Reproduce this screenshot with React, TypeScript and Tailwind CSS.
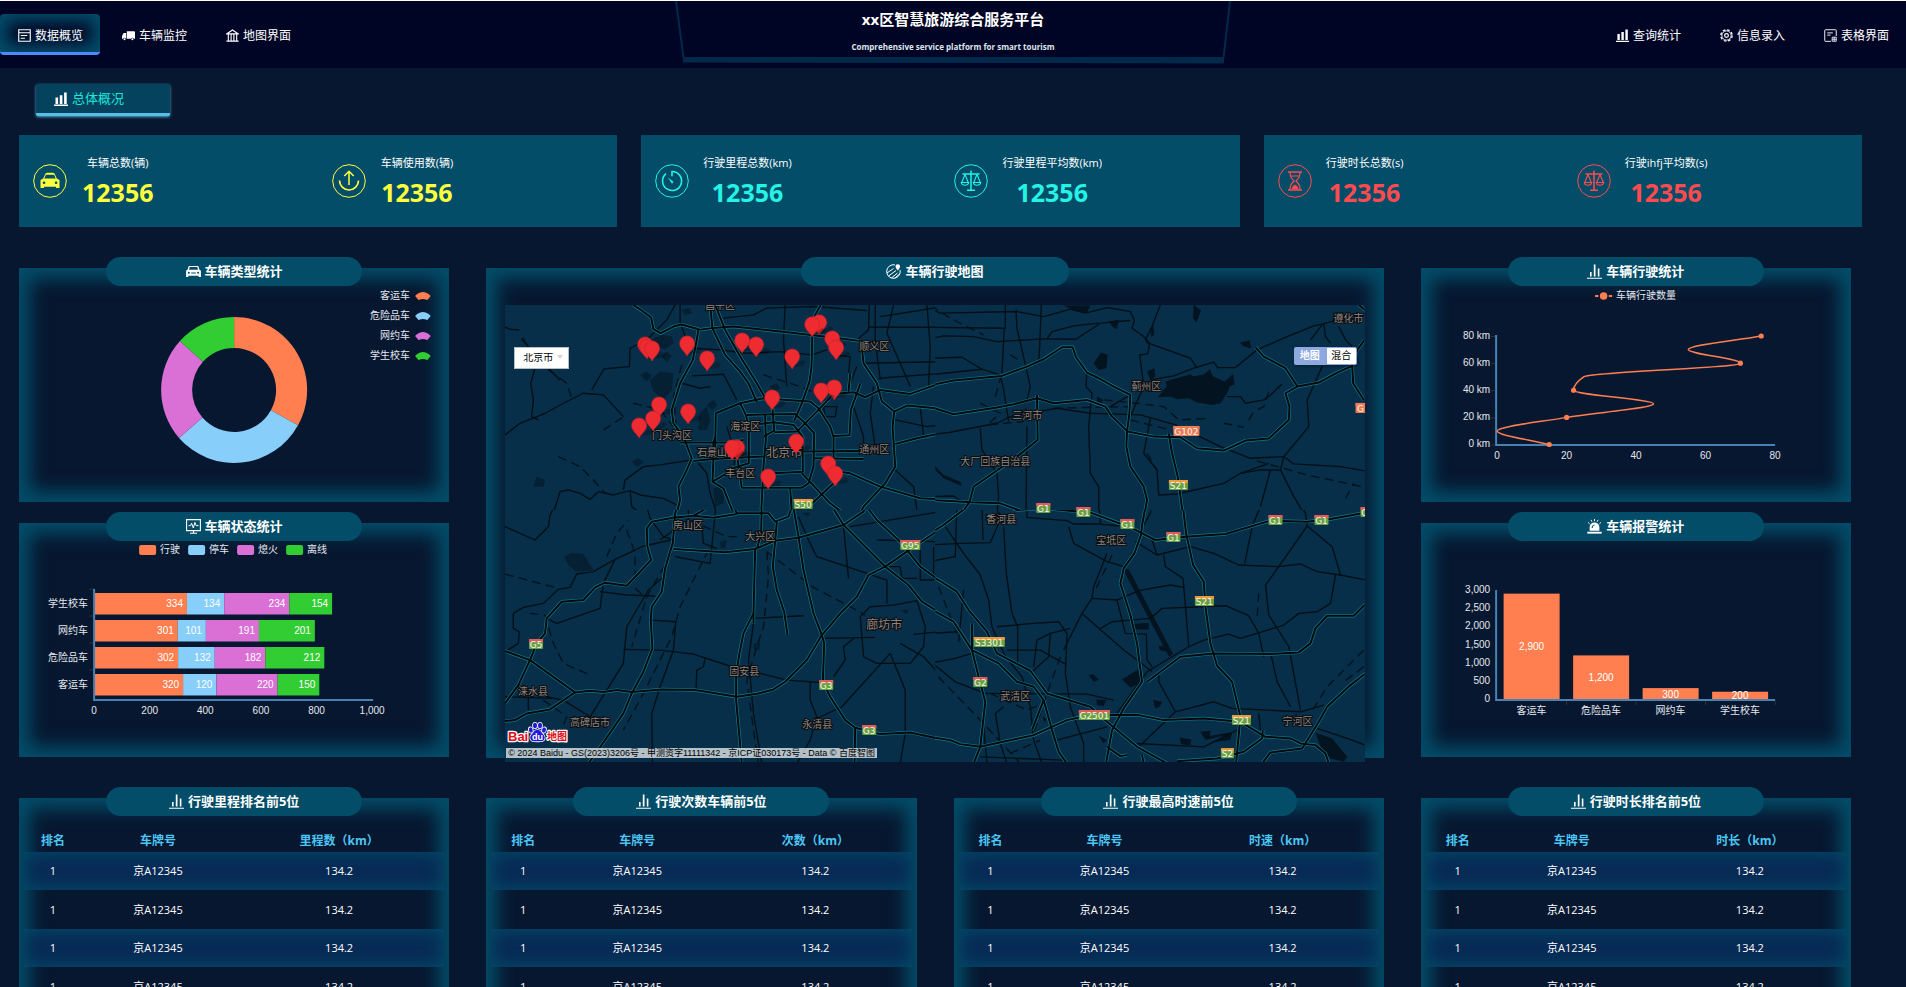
import type { ReactNode } from "react";

/* ---------- icons ---------- */

type IconProps = { className?: string };

const FormIcon = ({ className }: IconProps) => (
  <svg viewBox="0 0 14 14" className={className} fill="none" stroke="currentColor" aria-hidden="true">
    <path d="M.8.8h12.4v12.4H.8zM.8 4h12.4M3 7h7M3 10h4.5" strokeWidth="1.2" />
  </svg>
);

const TruckIcon = ({ className }: IconProps) => (
  <svg viewBox="0 0 14 14" className={className} fill="currentColor" aria-hidden="true">
    <path d="M5.2 2.5H13a1 1 0 0 1 1 1v7h-1.2a1.6 1.6 0 0 0-3.1 0H5.2zM0 7.5 1.8 4.4h2.7v6.1h-.3a1.6 1.6 0 0 0-3.1 0H0z" />
    <circle cx="2.7" cy="11" r="1.1" />
    <circle cx="11.2" cy="11" r="1.1" />
  </svg>
);

const BankIcon = ({ className }: IconProps) => (
  <svg viewBox="0 0 14 14" className={className} fill="none" stroke="currentColor" aria-hidden="true">
    <path d="M1 5.2 7 1l6 4.2zM2.5 5.5v7M5.5 5.5v7M8.5 5.5v7M11.5 5.5v7M.5 13h13" strokeWidth="1.2" />
  </svg>
);

const BarsIcon = ({ className }: IconProps) => (
  <svg viewBox="0 0 14 14" className={className} fill="currentColor" aria-hidden="true">
    <path d="M0 12.6h14V14H0zM1.5 5.5h2.6v6.4H1.5zM5.8 3.2h2.6v8.7H5.8zM10.1.6h2.6v11.3h-2.6z" />
  </svg>
);

const ThinBarsIcon = ({ className }: IconProps) => (
  <svg viewBox="0 0 15 15" className={className} fill="currentColor" aria-hidden="true">
    <path d="M0 13.8h15v1H0zM3 8h1.6v4.6H3zM6.8.4h1.7v12.2H6.8zM10.8 4.4h1.6v8.2h-1.6z" />
  </svg>
);

const GearIcon = ({ className }: IconProps) => (
  <svg viewBox="0 0 14 14" className={className} fill="none" stroke="currentColor" aria-hidden="true">
    <circle cx="7" cy="7" r="6.1" strokeWidth="1.4" strokeDasharray="2.79 2" />
    <circle cx="7" cy="7" r="5" strokeWidth="1" />
    <circle cx="7" cy="7" r="2" strokeWidth="1.3" />
  </svg>
);

const SheetIcon = ({ className }: IconProps) => (
  <svg viewBox="0 0 14 14" className={className} fill="none" stroke="currentColor" aria-hidden="true">
    <path d="M7.5 13.3H1.6a.8.8 0 0 1-.8-.8V1.6a.8.8 0 0 1 .8-.8h10.8a.8.8 0 0 1 .8.8v6M3.5 4.2h6M3.5 6.6h3.6" />
    <path d="M8.8 8.8h4.4v4.4H8.8zM8.8 11h4.4M11 8.8v4.4" strokeWidth=".9" />
  </svg>
);

const CarIcon = ({ className }: IconProps) => (
  <svg viewBox="0 0 16 14" className={className} fill="currentColor" aria-hidden="true">
    <path
      fillRule="evenodd"
      d="M3.6 1h8.8c.6 0 1 .3 1.1.8l.9 3.2c.9.2 1.6.9 1.6 1.800V12.800h-2.500v-1.300h-11V12.800H0V6.800C0 5.900.7 5.200 1.600 5l.9-3.200C2.600 1.300 3 1 3.600 1zm.3 1.200L3.200 5h9.600l-.7-2.800zM3 7.200a1.100 1.100 0 1 0 0 2.200 1.100 1.100 0 0 0 0-2.200zm10 0a1.100 1.100 0 1 0 0 2.200 1.100 1.100 0 0 0 0-2.200zM5.500 8h5v1.200h-5z"
    />
  </svg>
);

const MonitorIcon = ({ className }: IconProps) => (
  <svg viewBox="0 0 15 15" className={className} fill="none" stroke="currentColor" aria-hidden="true">
    <path d="M.6.6h13.8v11H.6zM7.500 11.600v2.200M4 14.300h7" strokeWidth="1.1" />
    <path d="M2.600 6.600h2l1-2.400 1.700 4.800 1.600-5.600 1.200 3.200h2.400" strokeWidth="1" />
  </svg>
);

const MapPinIcon = ({ className }: IconProps) => (
  <svg viewBox="0 0 15 15" className={className} fill="none" stroke="currentColor" aria-hidden="true">
    <path d="M9 .9A6.800 6.800 0 1 0 14.100 6M1 9l6.500-4.500M2.500 12 10 6.500M5.500 14l6-5M9 14l4.500-4" />
    <path d="M11.800.3a2.300 2.300 0 0 1 2.300 2.300c0 1.500-2.300 4-2.300 4S9.500 4.100 9.500 2.600A2.300 2.300 0 0 1 11.800.3z" fill="currentColor" stroke="none" />
  </svg>
);

const SirenIcon = ({ className }: IconProps) => (
  <svg viewBox="0 0 16 16" className={className} fill="currentColor" aria-hidden="true">
    <path fillRule="evenodd" d="M2.800 12.600V8.800a5.200 5.200 0 0 1 10.400 0v3.800zM5 9.500c0-2 1-3.200 3-3.600v1c-1.300.3-1.900 1.200-1.900 2.600z" />
    <path d="M.3 13.600h15.400v2H.3z" />
    <path d="M8 0v2.300M4.200.9l1 2M11.800.9l-1 2M1 3.600l1.800 1.500M15 3.600l-1.800 1.500" stroke="currentColor" strokeWidth="1" />
  </svg>
);

const Ring = ({ children }: { children: ReactNode }) => (
  <svg viewBox="0 0 34 34" className="size-[34px] shrink-0" fill="none" stroke="currentColor" aria-hidden="true">
    <circle cx="17" cy="17" r="16.300" strokeWidth="1" />
    {children}
  </svg>
);

const TaxiRing = () => (
  <Ring>
    <path
      d="M12.500 9.500 14 8.800h6l1.500.7 2.300 5 2.700 1.500v8h-3.500v-1.200H11V24H7.500v-8l2.700-1.500zM12.900 10.800l-1.600 3.700h11.400l-1.600-3.700z"
      fill="currentColor"
      fillRule="evenodd"
      stroke="none"
    />
    <path d="M11 18.800h.1M23 18.800h.1" stroke="#034d69" strokeWidth="2.600" strokeLinecap="round" />
  </Ring>
);

const UpRing = () => (
  <Ring>
    <path d="M17 21V7.500M12.300 12 17 7.300l4.700 4.700" strokeWidth="1.500" />
    <path d="M7.500 16.500a9.500 9.500 0 0 0 19 0" strokeWidth="1.700" />
  </Ring>
);

const DialRing = () => (
  <Ring>
    <path d="M11 9.700a9.500 9.500 0 1 0 6-2.200v4.800" strokeWidth="1.600" />
    <path d="m12.800 13.500 5.700 4.300-1.500 2z" fill="currentColor" stroke="none" />
  </Ring>
);

const ScaleRing = () => (
  <Ring>
    <path d="M8.500 10h17M17 6.500V26M13 26.200h8" strokeWidth="1.500" />
    <path d="m11 10.500-3.300 8M11 10.500l3.300 8M23 10.500l-3.300 8M23 10.500l3.300 8M7.300 18.500h7.400c-.3 2-1.700 2.700-3.700 2.700s-3.400-.7-3.700-2.700zM19.300 18.500h7.400c-.3 2-1.700 2.700-3.700 2.700s-3.400-.7-3.700-2.700z" strokeWidth="1.100" />
  </Ring>
);

const HourglassRing = () => (
  <Ring>
    <path d="M10 8h14M10 26h14" strokeWidth="1.500" />
    <path d="M12 8c0 5 1.500 6.500 4 9-2.500 2.500-4 4-4 9M22 8c0 5-1.500 6.500-4 9 2.500 2.500 4 4 4 9M13 12h8" strokeWidth="1.200" />
    <path d="M13.500 25c.5-2.500 2-3.500 3.500-4.500 1.500 1 3 2 3.500 4.500z" fill="currentColor" stroke="none" />
  </Ring>
);

/* ---------- header ---------- */

type NavEntry = { label: string; icon: ReactNode; active?: boolean };

const leftNav: NavEntry[] = [
  { label: "数据概览", icon: <FormIcon className="size-[13px]" />, active: true },
  { label: "车辆监控", icon: <TruckIcon className="size-[13px]" /> },
  { label: "地图界面", icon: <BankIcon className="size-[13px]" /> },
];

const rightNav: NavEntry[] = [
  { label: "查询统计", icon: <BarsIcon className="size-[13px]" /> },
  { label: "信息录入", icon: <GearIcon className="size-[13px]" /> },
  { label: "表格界面", icon: <SheetIcon className="size-[13px]" /> },
];

const Nav = ({ items }: { items: NavEntry[] }) => (
  <nav className="flex gap-1 pt-[13px]">
    {items.map((it) => (
      <a
        key={it.label}
        href="#"
        className={
          it.active
            ? "flex h-[41px] w-[100px] items-center gap-1 rounded-[4px] border-b-[3px] border-[#4a8cff] pt-[5px] pl-[18px] text-xs text-white shadow-[inset_0_0_16px_8px_#034d69]"
            : "flex h-[41px] w-[100px] items-center gap-1 pt-[2px] pl-[18px] text-xs text-white"
        }
      >
        {it.icon}
        {it.label}
      </a>
    ))}
  </nav>
);

const Header = () => (
  <header className="flex h-[68px] justify-between border-t border-white bg-[#000425]">
    <Nav items={leftNav} />
    <div className="relative h-[63px] w-[556px]">
      <svg viewBox="0 0 556 63" className="absolute inset-0 size-full" fill="none" aria-hidden="true">
        <path d="M1 0 8.500 57M555 0l-6.500 57" stroke="#01294a" strokeWidth="2" />
        <path d="M8 56h541v6.500L8 61.500z" fill="#01294a" />
      </svg>
      <div className="relative flex flex-col items-center pt-1.5">
        <h1 className="text-[15px] leading-6 font-bold text-white">xx区智慧旅游综合服务平台</h1>
        <p className="pt-2 text-[8px] leading-4 font-bold text-[#dfe6ee]">Comprehensive service platform for smart tourism</p>
      </div>
    </div>
    <Nav items={rightNav} />
  </header>
);

/* ---------- summary cards ---------- */

type Stat = { label: string; icon: ReactNode };

const statCards: { color: string; stats: Stat[] }[] = [
  {
    color: "text-[#ffff3c]",
    stats: [
      { label: "车辆总数(辆)", icon: <TaxiRing /> },
      { label: "车辆使用数(辆)", icon: <UpRing /> },
    ],
  },
  {
    color: "text-[#25f3e6]",
    stats: [
      { label: "行驶里程总数(km)", icon: <DialRing /> },
      { label: "行驶里程平均数(km)", icon: <ScaleRing /> },
    ],
  },
  {
    color: "text-[#ff4b4f]",
    stats: [
      { label: "行驶时长总数(s)", icon: <HourglassRing /> },
      { label: "行驶ihfj平均数(s)", icon: <ScaleRing /> },
    ],
  },
];

const StatCards = () => (
  <section className="mt-[19px] grid grid-cols-3 gap-6 pr-11 pl-[19px]">
    {statCards.map((card, i) => (
      <div key={i} className={`grid h-[92px] grid-cols-2 bg-[#034d69] ${card.color}`}>
        {card.stats.map((s) => (
          <div key={s.label} className="flex items-center gap-[14px] pl-[14px]">
            {s.icon}
            <div className="flex flex-col items-center pb-0.5">
              <span className="text-[11px] leading-4 text-white">{s.label}</span>
              <span className="mt-[7px] px-px text-[25px] leading-7 font-bold">12356</span>
            </div>
          </div>
        ))}
      </div>
    ))}
  </section>
);

/* ---------- panels ---------- */

const Panel = ({ title, icon, wide, children }: { title: string; icon: ReactNode; wide?: boolean; children: ReactNode }) => (
  <section className="flex flex-col items-center">
    <h2
      className={`z-10 -mb-[18px] flex h-[29px] items-center justify-center gap-1 rounded-full bg-[#034d69] text-[13px] font-bold text-white ${wide ? "w-[268px]" : "w-64"}`}
    >
      {icon}
      {title}
    </h2>
    <div className="w-full flex-1 shadow-[inset_0_0_18px_11px_#034d69]">{children}</div>
  </section>
);

const chartText = "font-['Liberation_Sans','Noto_Sans_CJK_SC',sans-serif] text-[10px] fill-[#e4e8ee]";
const barText = "font-['Liberation_Sans','Noto_Sans_CJK_SC',sans-serif] text-[10px] fill-white";
const chartSize = "block h-[234px] w-full";

const ORANGE = "#ff7f50";
const SKY = "#87cefa";
const ORCHID = "#da70d6";
const LIME = "#32cd32";
const palette = [ORANGE, SKY, ORCHID, LIME];
const vehicleTypes = ["客运车", "危险品车", "网约车", "学生校车"];

const TypeDonut = () => {
  const values = [335, 310, 234, 135];
  const total = values.reduce((a, b) => a + b, 0);
  const cx = 215;
  const cy = 122;
  const outer = 73;
  const inner = 42;
  const at = (share: number, r: number) => {
    const a = share * 2 * Math.PI;
    return `${cx + r * Math.sin(a)} ${cy - r * Math.cos(a)}`;
  };
  let acc = 0;
  return (
    <svg viewBox="0 0 430 234" className={chartSize} role="img" aria-label="车辆类型统计">
      {values.map((v, i) => {
        const from = acc / total;
        acc += v;
        const to = acc / total;
        return (
          <path
            key={i}
            fill={palette[i]}
            d={`M${at(from, outer)}A${outer} ${outer} 0 0 1 ${at(to, outer)}L${at(to, inner)}A${inner} ${inner} 0 0 0 ${at(from, inner)}Z`}
          />
        );
      })}
      {vehicleTypes.map((name, i) => (
        <g key={name}>
          <text x="391" y={31 + i * 20} textAnchor="end" className={chartText}>
            {name}
          </text>
          <path
            transform={`translate(396 ${24 + i * 20})`}
            fill={palette[i]}
            d="M0 4Q1.500 1.500 5 .4Q7.800-.3 10.600 .4Q14 1.500 15.600 4L12.200 8Q11.600 8.100 11 7.500Q7.800 6.500 4.600 7.500Q4 8.100 3.400 8Z"
          />
        </g>
      ))}
    </svg>
  );
};

const StatusBars = () => {
  const rows = [
    { name: "学生校车", v: [334, 134, 234, 154] },
    { name: "网约车", v: [301, 101, 191, 201] },
    { name: "危险品车", v: [302, 132, 182, 212] },
    { name: "客运车", v: [320, 120, 220, 150] },
  ];
  const x0 = 75;
  const k = 0.278;
  return (
    <svg viewBox="0 0 430 234" className={chartSize} role="img" aria-label="车辆状态统计">
      {["行驶", "停车", "熄火", "离线"].map((name, i) => (
        <g key={name}>
          <rect x={120 + i * 49} y="22" width="17" height="10" rx="2" fill={palette[i]} />
          <text x={141 + i * 49} y="30" className={chartText}>
            {name}
          </text>
        </g>
      ))}
      {rows.map((row, r) => {
        let sum = 0;
        const y = 70 + r * 27;
        return (
          <g key={row.name}>
            <path d={`M70 ${y - 4}h5`} stroke="#333" />
            <text x="69" y={y + 14} textAnchor="end" className={chartText}>
              {row.name}
            </text>
            {row.v.map((v, i) => {
              const x = x0 + sum * k;
              sum += v;
              return (
                <g key={i}>
                  <rect x={x} y={y} width={v * k} height="21.500" fill={palette[i]} />
                  <text x={x + v * k - 4} y={y + 14} textAnchor="end" className={barText}>
                    {v}
                  </text>
                </g>
              );
            })}
          </g>
        );
      })}
      <path d="M75 66v111M74 177h280" stroke="#4682b4" strokeWidth="2" fill="none" />
      {["0", "200", "400", "600", "800", "1,000"].map((t, i) => (
        <text key={t} x={75 + i * 55.600} y="191" textAnchor="middle" className={chartText}>
          {t}
        </text>
      ))}
    </svg>
  );
};

const drivePoints = [
  [15, 0],
  [0, 10],
  [20, 20],
  [45, 30],
  [22, 40],
  [25, 50],
  [70, 60],
  [55, 70],
  [76, 80],
];

const DriveLine = () => {
  const pts = drivePoints.map(([x, y]) => [76 + x * 3.475, 176.500 - y * 1.356]);
  const slope = (i: number) => (pts[i + 1][0] - pts[i][0]) / (pts[i + 1][1] - pts[i][1]);
  const last = pts.length - 1;
  const tangents = pts.map((_, i) => {
    if (i === 0) return slope(0);
    if (i === last) return slope(last - 1);
    const a = slope(i - 1);
    const b = slope(i);
    return a * b <= 0 ? 0 : (2 * a * b) / (a + b);
  });
  let d = `M${pts[0][0]} ${pts[0][1]}`;
  for (let i = 0; i < last; i++) {
    const h = (pts[i + 1][1] - pts[i][1]) / 3;
    d += `C${pts[i][0] + tangents[i] * h} ${pts[i][1] + h} ${pts[i + 1][0] - tangents[i + 1] * h} ${pts[i + 1][1] - h} ${pts[i + 1][0]} ${pts[i + 1][1]}`;
  }
  return (
    <svg viewBox="0 0 430 234" className={chartSize} role="img" aria-label="车辆行驶统计">
      <path d="M174 28h17" stroke={ORANGE} strokeWidth="2" />
      <circle cx="182.500" cy="28" r="4.500" fill={ORANGE} stroke="#071730" strokeWidth="1.500" />
      <text x="195" y="31" className={chartText}>
        车辆行驶数量
      </text>
      {[0, 20, 40, 60, 80].map((v) => (
        <g key={v}>
          <path d={`M70 ${177 - v * 1.356}h5`} stroke="#333" />
          <text x="69" y={179 - v * 1.356} textAnchor="end" className={chartText}>
            {v} km
          </text>
          <text x={76 + v * 3.475} y="191" textAnchor="middle" className={chartText}>
            {v}
          </text>
        </g>
      ))}
      <path d="M75 67v110M74 177h280" stroke="#4682b4" strokeWidth="2" fill="none" />
      <path d={d} fill="none" stroke={ORANGE} strokeWidth="1.500" />
      {pts
        .filter((_, i) => i % 2 === 0)
        .map(([x, y]) => (
          <circle key={y} cx={x} cy={y} r="2.600" fill={ORANGE} />
        ))}
    </svg>
  );
};

const AlarmBars = () => {
  const values = [2900, 1200, 300, 200];
  const k = 109 / 3000;
  return (
    <svg viewBox="0 0 430 234" className={chartSize} role="img" aria-label="车辆报警统计">
      {[0, 500, 1000, 1500, 2000, 2500, 3000].map((v) => (
        <text key={v} x="69" y={179 - v * k} textAnchor="end" className={chartText}>
          {v.toLocaleString("en-US")}
        </text>
      ))}
      {values.map((v, i) => {
        const x = 82.500 + i * 69.500;
        const h = v * k;
        return (
          <g key={i}>
            <rect x={x} y={176 - h} width="56" height={h} fill={ORANGE} />
            <text x={x + 28} y={180 - h / 2} textAnchor="middle" className={barText}>
              {v.toLocaleString("en-US")}
            </text>
            <path d={`M${x + 63} 178v4`} stroke="#333" />
            <text x={x + 28} y="191" textAnchor="middle" className={chartText}>
              {vehicleTypes[i]}
            </text>
          </g>
        );
      })}
      <path d="M75 67v110M74 177h280" stroke="#4682b4" strokeWidth="2" fill="none" />
    </svg>
  );
};

/* ---------- map ---------- */

/* Road geometry is kept per tile at three units per pixel. */
type Tile = { origin: [number, number]; major: string[]; minor: string[]; rail: string[]; water: string[] };

const tiles: Tile[] = [
  {
    origin: [-25, -65],
    major: [
      "460,195 485,212 513,233 520,268 542,280 580,260 605,254 655,268 650,300 638,360 600,430 575,510 580,550 610,590 635,655 620,690 595,740 600,780 590,820",
      "655,270 700,264 760,260 900,275 1000,286 1100,298 1135,303",
      "690,195 697,265 735,345 780,395 805,430 830,487",
      "705,195 735,270 780,350 830,430 857,477",
      "1022,195 1005,225 997,260 994,380 988,425 965,490 942,543",
      "1145,325 1150,370 1190,430 1205,485 1242,515 1237,560 1245,680 1215,730 1150,800 1140,820",
      "705,640 707,520 780,490 850,475 920,480 990,485 1015,505 1050,560 1060,590 1060,655 1060,695",
      "697,655 700,610 705,590",
      "640,663 700,657 697,725 730,745 760,820",
      "697,725 740,700",
      "800,525 945,522 975,550 1002,580 1000,680 985,730 965,743 785,743 778,700 770,640",
      "855,525 857,600 850,680 843,820",
      "780,490 797,525 806,560 806,670 740,690",
      "835,553 880,547 940,555 967,590 968,695 880,700 850,715",
      "600,608 740,608 790,600",
      "700,657 850,650",
      "970,635 1150,633",
      "1000,655 1150,657",
      "875,480 882,572 850,590",
      "882,577 950,575 1010,515 1060,462 1120,457 1155,472 1200,450 1290,462 1380,430",
      "965,700 1050,790 1090,820",
      "1060,655 1045,690 1110,700 1200,740 1320,775 1390,778",
      "1242,515 1280,497 1390,507",
      "1245,612 1310,595 1380,580",
      "1060,588 1108,586 1112,510 1140,432",
      "1105,455 1110,400",
      "930,743 935,820",
      "1060,730 985,800",
    ],
    minor: [
      "75,585 120,550 195,520 250,490 310,460 370,465 430,530",
      "585,195 560,240 500,300 450,325 448,380 372,387 335,450",
      "600,195 600,245 615,290",
      "165,385 152,430 160,480 155,530 175,540",
      "75,262 90,268 118,270",
      "125,295 160,340 240,420",
      "430,750 435,720 490,680 540,675 635,660",
      "220,820 240,755 265,750 300,760 330,778 355,755 400,765 450,752 480,765 550,775 590,795",
      "730,235 820,225 860,205 1000,200 1160,212",
      "915,195 910,300 920,440",
      "1167,195 1165,270 1130,300",
      "640,325 720,330 800,340 900,335 995,345 1040,330",
      "635,408 730,403 770,480",
      "1185,195 1185,300 1200,420",
      "1240,195 1220,280 1260,370 1290,440",
      "1167,262 1390,262",
      "1200,230 1390,200",
      "1150,370 1390,365",
      "1195,415 1390,400",
      "1340,195 1350,320 1345,440",
      "1060,345 1110,350 1105,400",
      "450,752 455,800 480,820",
      "605,430 660,445 690,440",
      "1130,380 1100,455",
      "1320,500 1330,590 1310,600",
      "1120,500 1150,590 1150,633",
      "1180,440 1170,520 1185,620",
      "1245,540 1340,560 1380,555",
      "1245,690 1300,740 1310,810",
      "1030,500 1035,530 1065,530 1070,500 1030,500",
      "740,560 765,640 760,700",
      "655,670 680,700 690,760 710,820",
    ],
    rail: [
      "605,375 580,470 590,570",
      "460,490 540,510 580,560",
      "235,650 300,680 340,720 375,760",
      "850,405 960,440 1030,470",
      "370,570 440,525",
      "205,390 260,430 275,475",
    ],
    water: [
      "510,300 545,285 575,290 580,310 555,328 530,320",
      "510,420 540,395 580,400 575,450 550,480 520,455",
      "480,405 500,395 515,408 500,425",
      "658,520 680,500 690,540 680,570 655,570",
      "170,710 195,720 190,740 160,740",
      "680,495 700,480 712,495 695,510",
      "868,440 890,430 900,445 880,455",
      "605,210 630,205 635,222 612,225",
      "545,350 560,335 575,348 560,368",
      "455,665 475,655 490,668 470,680",
      "700,745 735,735 730,790 705,800",
      "123,300 133,292 142,318",
    ],
  },
  {
    origin: [425, -65],
    major: [
      "-5,437 70,422 215,408 290,380 340,358 395,322 427,322 437,352 470,398 505,415 550,440 600,465 597,520 590,575 588,620 600,680 640,740 650,780 643,820",
      "-5,503 20,507 70,523 200,503 250,493 320,475 370,490 470,480 525,500 545,530 592,575 670,590 750,592 800,625 880,632 945,602 1015,596 1075,540 1077,500 1065,460 1100,440 1165,428 1220,398 1265,378 1268,430 1300,480",
      "975,322 1000,350 1065,385 1100,438",
      "715,580 725,640 742,710 757,820",
      "320,465 322,600 260,650 210,685 130,740 118,785 95,820",
      "-5,780 60,783 120,787 210,790 270,812",
      "1265,378 1280,330 1302,300",
      "1285,195 1305,212",
    ],
    minor: [
      "-5,203 30,220 260,215 340,230 420,208 465,220 530,203 600,215 612,242 605,265 640,290 660,312 780,355 800,385",
      "-5,262 225,265 225,195",
      "-5,297 40,288 130,290 200,305 340,297 437,298 510,250 600,242",
      "-5,355 95,352 155,388 210,405 220,450 235,545",
      "350,297 365,275 430,258 505,250",
      "222,265 215,400",
      "257,210 260,265 275,330 300,440 290,480",
      "333,195 328,320 325,370",
      "690,195 665,260 645,300 657,315 652,342 628,345 640,440 600,530",
      "660,420 730,408 790,385 850,367 862,383 915,383 980,330 1070,290 1150,258 1205,245 1215,230",
      "-5,585 60,577 200,550 240,530 380,505 480,520 630,525 735,555 870,620 960,655 1060,650 1090,672 1230,680 1305,693",
      "470,390 467,440 485,460 475,560 480,700 505,740 505,820",
      "150,565 155,630 200,700 205,770 200,820",
      "290,560 287,820",
      "660,535 640,640 680,690 685,765 740,762 880,730 930,700 1015,670",
      "1175,380 1130,480 1135,560 1060,650 1050,690 990,690 930,700",
      "1050,690 1090,770 1120,820",
      "1020,690 990,800",
      "-5,405 155,388",
      "600,465 540,500",
      "1180,250 1185,290 1200,310",
      "1140,300 1175,255",
      "890,470 930,470 945,490 1000,480 1020,465 1055,432",
      "-5,770 70,768 100,790",
      "1225,260 1245,300 1265,320",
    ],
    rail: [
      "0,197 60,235 160,285",
      "150,490 210,520 170,555 280,545",
      "520,480 620,490 700,500 745,540 840,535",
      "600,540 720,570",
      "880,550 940,562",
      "980,663 1130,705 1305,742",
      "240,345 262,358",
      "650,640 680,690",
      "1245,775 1270,730",
      "955,540 970,515 1000,500 1015,455",
      "195,470 215,400",
      "370,505 600,500",
    ],
    water: [
      "682,472 710,438 705,425 780,403 788,410 820,404 838,388 848,410 883,425 908,402 912,434 898,440 890,460 870,490 845,495 800,488 775,475 740,478 720,470",
      "928,308 958,302 962,325 940,320",
      "490,370 512,338 532,345 528,385 505,390",
      "400,197 480,197 470,218 430,212",
      "535,245 565,240 560,268 548,262",
      "650,395 672,385 675,410 660,420",
      "790,195 812,212 798,248 788,235",
      "660,265 668,255 672,285 662,290",
      "0,665 40,705 90,725 95,738 40,715 5,680",
      "500,470 518,480 512,492 500,488",
    ],
  },
  {
    origin: [-25, 195],
    major: [
      "600,-5 585,40 578,130 570,155 555,205 545,275 515,320 512,360 517,445 490,515 455,580 430,640 375,720 325,790",
      "580,147 735,157 825,147 885,122 955,113 1030,92 1090,75 1150,35 1165,-5",
      "690,-5 680,25 640,47 578,53 515,65 500,85 502,140 513,180 480,215 440,257 375,248 345,262 310,300 245,305 200,355 195,400 170,430 150,480 115,555 75,610",
      "75,453 150,480 285,577 210,628 140,640 105,660 75,663",
      "285,577 330,572 370,576 410,570 455,576 545,568 645,570 770,590 835,580 880,568 915,545 980,480 1025,405 1085,335 1130,290 1165,225 1215,200 1280,155 1390,80",
      "825,147 820,340 790,400 778,460 768,520 768,600 785,790",
      "820,340 820,370",
      "885,122 878,200 890,270 912,335 922,405",
      "935,-5 955,110 970,210 1000,340 1025,405 1032,430 1028,545 1050,590 1095,660 1125,683 1200,702 1290,697 1390,719",
      "1125,683 1123,790",
      "1040,-5 1090,75 1215,200 1285,255 1325,305 1390,345",
      "1140,-5 1190,60 1260,125 1320,200 1390,250",
      "750,-5 770,40 865,40 885,65 925,50 935,20",
      "890,65 885,122",
      "845,-5 843,100 830,147",
      "640,47 700,53 770,42",
    ],
    minor: [
      "75,80 165,120 205,80 210,45 235,-5",
      "460,-5 500,20 510,55 550,110 580,120",
      "575,120 490,138 455,155 405,178 340,215 290,222 270,262 235,268 190,310 130,322 100,340 100,385 118,395 115,430 75,455",
      "405,178 370,250 360,325 230,370 200,355",
      "360,275 440,285 525,288",
      "545,235 505,270 440,380 430,490 330,650",
      "515,360 587,365 580,450 540,560 515,640 517,790",
      "430,448 540,450 640,462 710,485 770,505 840,520 920,540 1028,548",
      "675,475 670,500 650,510 648,565",
      "820,355 970,347",
      "955,50 985,120 1010,170 1100,200 1220,240 1220,310",
      "1025,415 1185,412",
      "1140,350 1170,320 1240,315 1310,302 1335,380 1330,440 1290,490 1190,490 1150,470 1140,350",
      "1230,460 1085,620 1000,660 1010,650 990,600 990,545",
      "1010,650 990,720 950,790",
      "1230,460 1275,570 1275,700 1260,790",
      "1120,415 1090,440 1095,480 1060,530",
      "665,80 670,130 710,145",
      "710,-5 690,190 585,170",
      "820,370 805,480 820,640 845,790",
      "200,590 250,600 330,650",
      "1090,80 1105,235",
      "1190,120 1380,125",
      "1320,150 1320,240 1360,240 1360,140",
      "1225,200 1260,200 1265,235 1310,235",
      "1260,430 1330,470 1375,520",
      "1300,403 1380,395",
      "1110,80 1380,35",
      "625,10 625,60 540,120",
      "145,590 145,630",
      "75,590 215,595",
    ],
    rail: [
      "75,222 160,245 235,265",
      "685,150 600,320 575,410 490,580 430,690",
      "575,160 500,290 455,440",
      "860,155 865,230 850,380 830,440 800,540 820,690 835,790",
      "860,155 1000,262 1110,320 1155,345",
      "630,60 740,110 770,110",
      "150,340 195,345 220,430 250,490 330,525",
      "380,170 410,100 445,60",
      "440,90 465,160 465,240",
      "190,600 260,650 240,700 110,720",
      "465,265 500,295",
    ],
    water: [
      "252,170 275,158 310,162 340,210 290,215 265,195",
      "545,0 570,5 560,25",
      "965,40 990,38 985,50",
      "715,0 735,10 730,30 715,20",
      "1258,330 1285,328 1280,342",
      "820,430 840,428 838,450 822,450",
      "720,125 740,120 735,145 722,145",
    ],
  },
  {
    origin: [425, 195],
    major: [
      "-5,3 120,8 210,10 260,30 340,25 480,38 600,82 675,120 765,110 885,102 1020,62 1130,65 1200,57 1305,38",
      "118,0 105,25 40,75 -5,103",
      "650,-5 635,75 632,105 612,160 580,205 570,250 600,345 620,430 635,545 580,625 545,690 527,790",
      "755,-5 767,100 788,195 820,245 825,320 840,430 860,497 905,545 930,650 917,790",
      "-5,225 25,240 80,275 115,330 170,395 200,460 300,512 350,580 480,620 530,665 620,740 710,790",
      "-5,323 70,365 125,450 205,490 260,545 310,560 340,600 365,690 385,755 410,790",
      "125,370 125,450 145,530 165,605 150,740 130,790",
      "-5,710 60,720 90,732 150,740 310,705 410,660 480,645 625,645 700,660 820,655 930,665 1005,710 1080,715 1110,730 1155,735 1185,760 1195,790",
      "650,545 750,470 850,460 1020,462 1105,457 1140,430 1155,385 1190,347 1270,347 1305,312",
      "1305,520 1260,555 1190,620 1165,665 1115,745 1020,757 995,790",
      "740,783 860,775 940,755 995,715 997,690",
      "340,600 305,690",
      "635,765 640,790",
      "530,740 570,768 590,765",
    ],
    minor: [
      "-5,135 90,130 180,128 205,70 200,-5",
      "80,5 75,170 -5,185",
      "155,5 158,120",
      "220,80 228,220 245,340 262,380 262,490",
      "290,-5 290,52 410,62 430,72 500,72 600,80",
      "45,80 100,160 150,225 175,300 185,380 225,470 275,530 300,620 310,720 335,790",
      "505,-5 510,70",
      "615,125 680,165 780,140 850,160 925,195 1045,200 1110,192 1160,215 1230,225 1305,240",
      "680,165 665,120",
      "700,165 705,200 758,235 775,440 725,470 650,515 560,640",
      "415,80 430,130 530,185 580,200",
      "530,160 490,260 485,295 455,340 400,450",
      "485,295 560,300 625,272 720,255 760,262",
      "455,340 580,450 640,495 665,515",
      "510,385 545,365 660,355 695,325 885,317 955,347 985,400 1000,470",
      "560,300 585,400 648,402 650,480 665,500",
      "775,440 820,420 895,402 930,415 1060,375 1105,340 1160,335 1200,310 1215,225",
      "1130,78 1045,200 1005,255 1015,345 1075,440 1110,630",
      "1130,78 1205,140 1230,225",
      "1000,-5 965,80 943,190",
      "1100,-5 1125,40 1130,78",
      "1022,465 1040,545 1080,620",
      "200,380 310,370 385,365 410,400 405,520 420,620 460,730 460,790",
      "-5,400 85,395",
      "85,425 100,270",
      "-5,490 75,475 125,460",
      "-5,480 75,545 165,580",
      "165,580 470,582 550,600",
      "230,450 330,450 405,492",
      "220,620 195,640 210,730 230,790",
      "735,635 850,605 905,625 1110,635 1180,615",
      "735,635 685,545 685,515",
      "735,635 620,745",
      "620,730 820,740 920,690",
      "150,770 400,780",
      "360,400 355,470 300,520",
      "420,385 360,400 320,420 310,500",
      "10,135 12,260",
      "160,680 170,790",
      "985,640 990,690",
      "1160,685 1250,715 1305,735",
      "380,720 530,680",
      "670,-5 660,40 640,75",
    ],
    rail: [
      "-5,500 150,660 270,790",
      "25,260 60,350 90,420",
      "545,165 495,270",
      "1300,450 1190,560 1140,640",
      "1300,500 1240,545",
      "390,470 350,580 310,700",
      "985,280 980,355",
      "240,760 330,720",
      "180,580 290,630 340,610",
    ],
    water: [
      "578,208 595,208 728,462 716,470",
      "575,538 622,508 636,548 600,562",
      "475,525 490,523 505,540 490,545",
      "498,598 528,600 520,618 500,615",
      "668,600 695,605 688,620 675,625",
      "810,695 840,692 838,708 905,696 900,720 850,726 880,706 825,720",
      "748,712 782,718 780,735 752,732",
      "1155,698 1205,715 1230,745 1250,770 1240,785 1200,775 1170,740",
      "685,437 712,440 705,455 688,450",
      "610,372 655,368 655,388 615,388",
      "505,707 530,720 520,730",
      "335,650 348,655 345,668",
    ],
  },
];

const tileClips = [
  [0, 0, 430, 205],
  [430, 0, 429, 205],
  [0, 205, 430, 252],
  [430, 205, 429, 252],
];

const places: { t: string; x: number; y: number; big?: boolean }[] = [
  { t: "昌平区", x: 215, y: 4 },
  { t: "顺义区", x: 369, y: 45 },
  { t: "海淀区", x: 240, y: 125 },
  { t: "门头沟区", x: 167, y: 134 },
  { t: "石景山区", x: 212, y: 151 },
  { t: "北京市", x: 279, y: 152, big: true },
  { t: "丰台区", x: 235, y: 172 },
  { t: "通州区", x: 369, y: 148 },
  { t: "遵化市", x: 843, y: 17 },
  { t: "蓟州区", x: 641, y: 85 },
  { t: "三河市", x: 522, y: 114 },
  { t: "大厂回族自治县", x: 490, y: 160 },
  { t: "房山区", x: 183, y: 224 },
  { t: "大兴区", x: 255, y: 235 },
  { t: "廊坊市", x: 379, y: 324, big: true },
  { t: "固安县", x: 239, y: 370 },
  { t: "涞水县", x: 28, y: 390 },
  { t: "高碑店市", x: 85, y: 421 },
  { t: "永清县", x: 312, y: 423 },
  { t: "香河县", x: 496, y: 218 },
  { t: "宝坻区", x: 606, y: 239 },
  { t: "武清区", x: 510, y: 395 },
  { t: "宁河区", x: 792, y: 420 },
];

const shields: { t: string; x: number; y: number; w: number; top: string; base: string }[] = [
  { t: "S50", x: 298, y: 199, w: 19, top: "#ee9a3d", base: "#6aa040" },
  { t: "G95", x: 405, y: 240, w: 20, top: "#e25a5a", base: "#6aa040" },
  { t: "G5", x: 31, y: 339, w: 14, top: "#e25a5a", base: "#6aa040" },
  { t: "G3", x: 321, y: 380, w: 14, top: "#e25a5a", base: "#6aa040" },
  { t: "G3", x: 364, y: 425, w: 14, top: "#e25a5a", base: "#6aa040" },
  { t: "G102", x: 681, y: 126, w: 26, top: "#ee7b55", base: "#ee7b55" },
  { t: "G", x: 855, y: 103, w: 10, top: "#ee7b55", base: "#ee7b55" },
  { t: "S21", x: 673, y: 180, w: 19, top: "#ee9a3d", base: "#6aa040" },
  { t: "G1", x: 538, y: 203, w: 14, top: "#e25a5a", base: "#6aa040" },
  { t: "G1", x: 578, y: 207, w: 14, top: "#e25a5a", base: "#6aa040" },
  { t: "G1", x: 622, y: 219, w: 14, top: "#e25a5a", base: "#6aa040" },
  { t: "G1", x: 668, y: 232, w: 14, top: "#e25a5a", base: "#6aa040" },
  { t: "G1", x: 770, y: 215, w: 14, top: "#e25a5a", base: "#6aa040" },
  { t: "G1", x: 816, y: 215, w: 14, top: "#e25a5a", base: "#6aa040" },
  { t: "G1", x: 862, y: 207, w: 14, top: "#e25a5a", base: "#6aa040" },
  { t: "S21", x: 699, y: 296, w: 19, top: "#ee9a3d", base: "#6aa040" },
  { t: "S3301", x: 484, y: 337, w: 31, top: "#ee9a3d", base: "#6aa040" },
  { t: "G2", x: 475, y: 377, w: 14, top: "#e25a5a", base: "#6aa040" },
  { t: "G2501", x: 589, y: 410, w: 31, top: "#e25a5a", base: "#6aa040" },
  { t: "S21", x: 736, y: 415, w: 19, top: "#ee9a3d", base: "#6aa040" },
  { t: "S2", x: 722, y: 448, w: 13, top: "#ee9a3d", base: "#6aa040" },
];

/* Tip of every vehicle marker. */
const markers: [number, number][] = [
  [314, 30],
  [307, 32],
  [140, 52],
  [142, 54],
  [147, 56],
  [182, 51],
  [202, 66],
  [237, 48],
  [251, 52],
  [287, 64],
  [327, 46],
  [331, 55],
  [154, 112],
  [148, 126],
  [134, 133],
  [183, 119],
  [267, 105],
  [329, 95],
  [316, 98],
  [232, 155],
  [227, 155],
  [291, 149],
  [263, 184],
  [323, 171],
  [330, 181],
];

const MapCanvas = () => (
  <svg viewBox="0 0 859 457" preserveAspectRatio="xMidYMid slice" className="block size-full bg-[#082f4a]" role="img" aria-label="车辆行驶地图">
    <defs>
      {tileClips.map(([x, y, w, h], i) => (
        <clipPath key={i} id={`tile${i}`}>
          <rect x={x} y={y} width={w} height={h} />
        </clipPath>
      ))}
    </defs>
    {tiles.map((tile, n) => (
      <g key={n} clipPath={`url(#tile${n})`}>
        <g transform={`translate(${tile.origin[0]} ${tile.origin[1]}) scale(${1 / 3})`} fill="none" strokeLinejoin="round">
          {tile.water.map((p) => (
            <polygon key={p} points={p} fill={n === 0 || n === 2 ? "#051f33" : "#03131f"} />
          ))}
          {tile.rail.map((p) => (
            <polyline key={p} points={p} stroke="#03121a" strokeWidth="4" strokeDasharray="26 16" />
          ))}
          {tile.minor.map((p) => (
            <polyline key={p} points={p} stroke="#020f14" strokeWidth="4" />
          ))}
          {tile.major.map((p) => (
            <polyline key={p} points={p} stroke="#15788a" strokeWidth="10" />
          ))}
          {tile.major.map((p) => (
            <polyline key={p} points={p} stroke="#01090c" strokeWidth="6" />
          ))}
        </g>
      </g>
    ))}
    {places.map((p) => (
      <text
        key={p.t}
        x={p.x}
        y={p.y}
        textAnchor="middle"
        paintOrder="stroke"
        stroke="#0c0c0e"
        strokeWidth="2"
        fill="#8b8580"
        className={p.big ? "font-['Noto_Sans_CJK_SC',sans-serif] text-[12px]" : "font-['Noto_Sans_CJK_SC',sans-serif] text-[10px]"}
      >
        {p.t}
      </text>
    ))}
    {shields.map((s) => (
      <g key={`${s.x}-${s.y}`}>
        <rect x={s.x - s.w / 2} y={s.y - 5} width={s.w} height="10" rx="1" fill={s.base} />
        <rect x={s.x - s.w / 2} y={s.y - 5} width={s.w} height="3" fill={s.top} />
        <text x={s.x} y={s.y + 4} textAnchor="middle" fill="#f4f6ee" className="font-['DejaVu_Sans',sans-serif] text-[9px]">
          {s.t}
        </text>
      </g>
    ))}
    {markers.map(([x, y], i) => (
      <g key={i}>
        <path d={`M${x + 1} ${y - 2}l9-7 4 2-3 4z`} fill="#000" opacity=".25" />
        <path
          d={`M${x} ${y}c-2-4-7.500-7.500-7.500-12.500a7.500 7.500 0 0 1 15 0c0 5-5.500 8.500-7.500 12.500z`}
          fill="#ee2b30"
          stroke="#c9202a"
          strokeWidth=".6"
        />
      </g>
    ))}
  </svg>
);

const BaiduLogo = () => (
  <svg viewBox="0 0 62 24" className="h-6 w-[62px]" aria-label="百度地图" role="img">
    <g paintOrder="stroke" stroke="#fff" strokeWidth="2.500" strokeLinejoin="round">
      <text x="2" y="21" fill="#e10b17" className="font-['Liberation_Sans',sans-serif] text-[13px] font-bold">
        Bai
      </text>
      <text x="41" y="20" fill="#e10b17" className="font-['Noto_Sans_CJK_SC',sans-serif] text-[10px] font-bold">
        地图
      </text>
      <g fill="#2319dc" strokeWidth="1.600">
        <ellipse cx="24.800" cy="10" rx="1.900" ry="2.700" transform="rotate(-15 24.800 10)" />
        <ellipse cx="29" cy="5.500" rx="2" ry="2.800" />
        <ellipse cx="34" cy="5.500" rx="2" ry="2.800" />
        <ellipse cx="38" cy="10" rx="1.900" ry="2.700" transform="rotate(15 38 10)" />
        <path d="M31.500 9.800c3 0 3.700 2.700 5.800 4.700 2.300 2.200 2 6.500-2 6.700-1.500.1-6 .1-7.500 0-4-.2-4.500-4.400-2.200-6.700C27.800 12.500 28.500 9.800 31.500 9.800z" />
      </g>
    </g>
    <text x="31.500" y="19.500" textAnchor="middle" fill="#fff" className="font-['Liberation_Sans',sans-serif] text-[9px] font-bold">
      du
    </text>
  </svg>
);

const VehicleMap = () => (
  <div className="px-[19px] pt-[37px]">
    <div className="relative -mb-1 h-[457px] overflow-hidden">
      <MapCanvas />
      <select
        aria-label="城市"
        defaultValue="北京市"
        className="absolute top-[42px] left-[9px] h-[22px] w-[55px] appearance-none border border-[#b9bcc4] bg-white pl-2 font-['Liberation_Sans','Noto_Sans_CJK_SC',sans-serif] text-[10px] leading-none text-black"
      >
        <option>北京市</option>
      </select>
      <span className="pointer-events-none absolute top-[50px] left-[52px] size-0 border-x-[3px] border-t-4 border-x-transparent border-t-[#d5d5dc]" />
      <div className="absolute top-[42px] right-[8px] flex h-[18px] font-['Liberation_Sans','Noto_Sans_CJK_SC',sans-serif] text-[10px] leading-none shadow-[1px_1px_3px_rgba(0,0,0,0.4)]">
        <button type="button" className="w-8 rounded-l-[2px] bg-[#8ea8e0] font-bold text-white">
          地图
        </button>
        <button type="button" className="w-[31px] rounded-r-[2px] border border-[#8ba4dc] bg-white text-black">
          混合
        </button>
      </div>
      <div className="absolute bottom-0 left-px flex flex-col items-start gap-1 pb-[4px]">
        <BaiduLogo />
        <p className="bg-white/70 px-[2px] font-['Liberation_Sans','Noto_Sans_CJK_SC',sans-serif] text-[9px] leading-[10px] whitespace-nowrap text-black">
          © 2024 Baidu - GS(2023)3206号 - 甲测资字11111342 - 京ICP证030173号 - Data © 百度智图
        </p>
      </div>
    </div>
  </div>
);

/* ---------- rankings ---------- */

const rankings = [
  { title: "行驶里程排名前5位", metric: "里程数（km）", first: "w-[58px]", second: "w-[152px]" },
  { title: "行驶次数车辆前5位", metric: "次数（km）", first: "w-16", second: "w-[164px]" },
  { title: "行驶最高时速前5位", metric: "时速（km）", first: "w-16", second: "w-[164px]" },
  { title: "行驶时长排名前5位", metric: "时长（km）", first: "w-16", second: "w-[164px]" },
];

const rankRows = [1, 1, 1, 1, 1].map((rank) => ({ rank, plate: "京A12345", value: "134.2" }));

const RankTable = ({ metric, first, second }: { metric: string; first: string; second: string }) => (
  <div className="px-[5px] pt-8 pb-4">
    <table className="w-full table-fixed border-collapse text-center text-[11px] text-white">
      <thead>
        <tr className="h-[22px] text-xs text-[#4cc6f4]">
          <th scope="col" className={`p-0 leading-4 ${first}`}>
            排名
          </th>
          <th scope="col" className={`p-0 leading-4 ${second}`}>
            车牌号
          </th>
          <th scope="col" className="p-0 leading-4">
            {metric}
          </th>
        </tr>
      </thead>
      <tbody>
        {rankRows.map((r, i) => (
          <tr key={i} className="odd:h-[38px] odd:bg-[#072a55] odd:shadow-[inset_0_0_18px_1px_#034d69] even:h-[39px]">
            <td className="p-0 leading-4">{r.rank}</td>
            <td className="p-0 leading-4">{r.plate}</td>
            <td className="p-0 leading-4">{r.value}</td>
          </tr>
        ))}
      </tbody>
    </table>
  </div>
);

/* ---------- page ---------- */

export default function App() {
  return (
    <div className="h-screen overflow-x-hidden overflow-y-auto bg-[#071730] font-['Open_Sans','Noto_Sans_CJK_SC',sans-serif] [scrollbar-width:none]">
      <Header />
      <main className="pb-8">
        <button
          type="button"
          className="mt-4 ml-9 flex h-8 w-[134px] items-center gap-1 rounded-[2px] border-b-[3px] border-[#58bfe4] bg-[#04425e] pl-[18px] text-[13px] text-[#1ce8dc] shadow-[0_1px_3px_#4fa9cc]"
        >
          <BarsIcon className="size-[14px] text-white" />
          总体概况
        </button>
        <StatCards />
        <div className="pr-[55px] pl-[19px]">
          <div className="mt-[30px] grid grid-cols-[430fr_897fr_430fr] gap-x-[37px]">
            <div className="flex flex-col gap-[10px]">
              <Panel title="车辆类型统计" icon={<CarIcon className="h-[13px] w-[15px]" />}>
                <TypeDonut />
              </Panel>
              <Panel title="车辆状态统计" icon={<MonitorIcon className="size-[15px]" />}>
                <StatusBars />
              </Panel>
            </div>
            <Panel title="车辆行驶地图" icon={<MapPinIcon className="size-[15px]" />} wide>
              <VehicleMap />
            </Panel>
            <div className="flex flex-col gap-[10px]">
              <Panel title="车辆行驶统计" icon={<ThinBarsIcon className="size-[15px]" />}>
                <DriveLine />
              </Panel>
              <Panel title="车辆报警统计" icon={<SirenIcon className="size-[15px]" />}>
                <AlarmBars />
              </Panel>
            </div>
          </div>
          <div className="mt-[29px] grid grid-cols-4 gap-x-[37px]">
            {rankings.map((r) => (
              <Panel key={r.title} title={r.title} icon={<ThinBarsIcon className="size-[15px]" />}>
                <RankTable metric={r.metric} first={r.first} second={r.second} />
              </Panel>
            ))}
          </div>
        </div>
      </main>
    </div>
  );
}
